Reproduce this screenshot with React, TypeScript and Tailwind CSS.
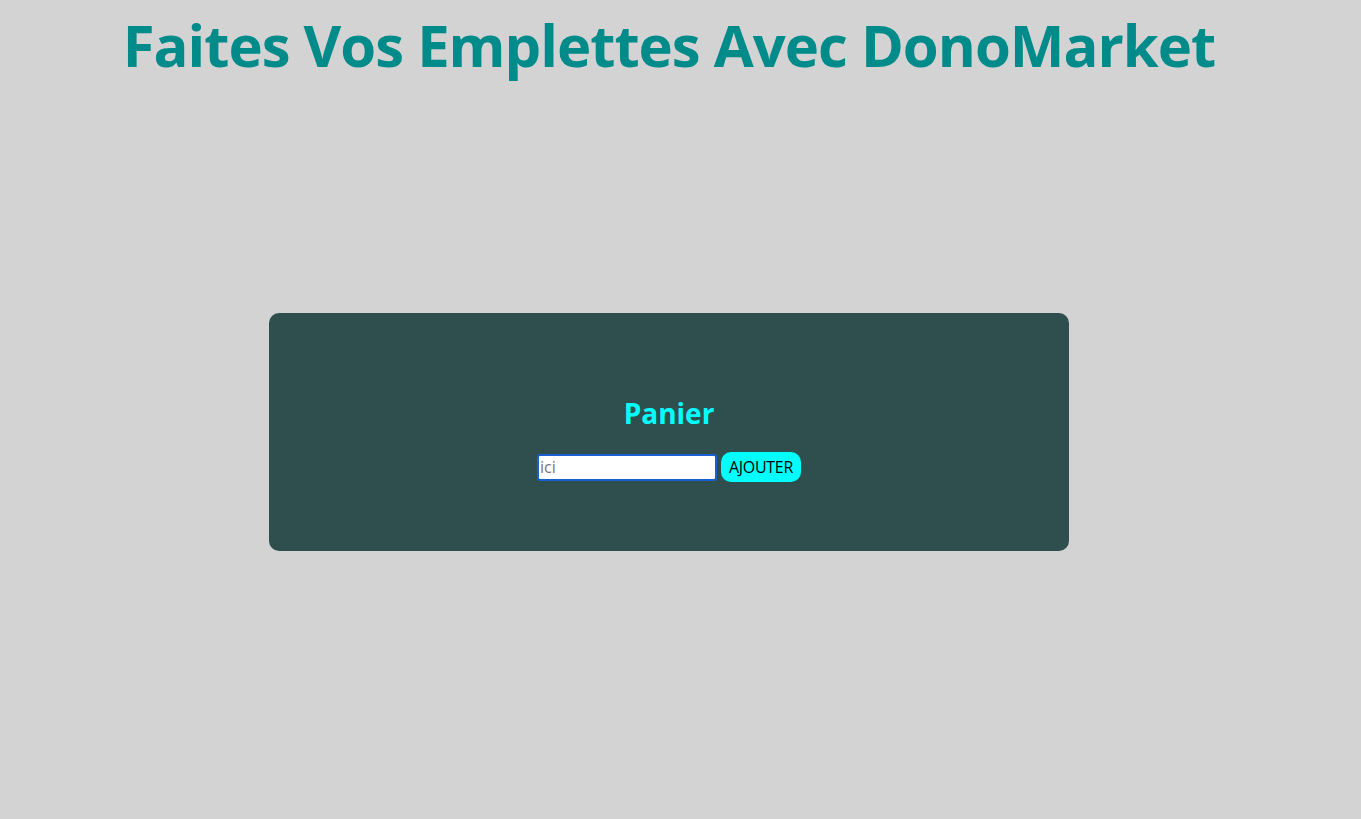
export default function App() {
  return (
    <div className="min-h-[819px] bg-[#d3d3d3] pr-[23px] font-['Open_Sans','Noto_Sans',sans-serif]">
      <h1 className="pt-[7px] text-center text-[58px] font-bold leading-[76px] tracking-[-1px] text-[#008b8b]">
        Faites Vos Emplettes Avec DonoMarket
      </h1>
      <div className="mx-auto mt-[230px] flex h-[238px] w-[800px] flex-col items-center rounded-[10px] bg-[#2f4f4f] pt-[80px]">
        <h2 className="text-[28px] font-bold leading-[40px] text-[#00ffff]">Panier</h2>
        <div className="mt-[19px] flex items-center gap-[4px]">
          <input
            autoFocus
            placeholder="ici"
            className="h-[27px] w-[180px] rounded-[3px] border-2 border-[#1a5fd0] bg-white px-[1px] text-[16px] text-black outline-none placeholder:text-[#757575]"
          />
          <button className="h-[30px] w-[80px] rounded-[10px] bg-[#00ffff] text-[16px] tracking-[-0.3px] text-black">
            AJOUTER
          </button>
        </div>
      </div>
    </div>
  );
}
